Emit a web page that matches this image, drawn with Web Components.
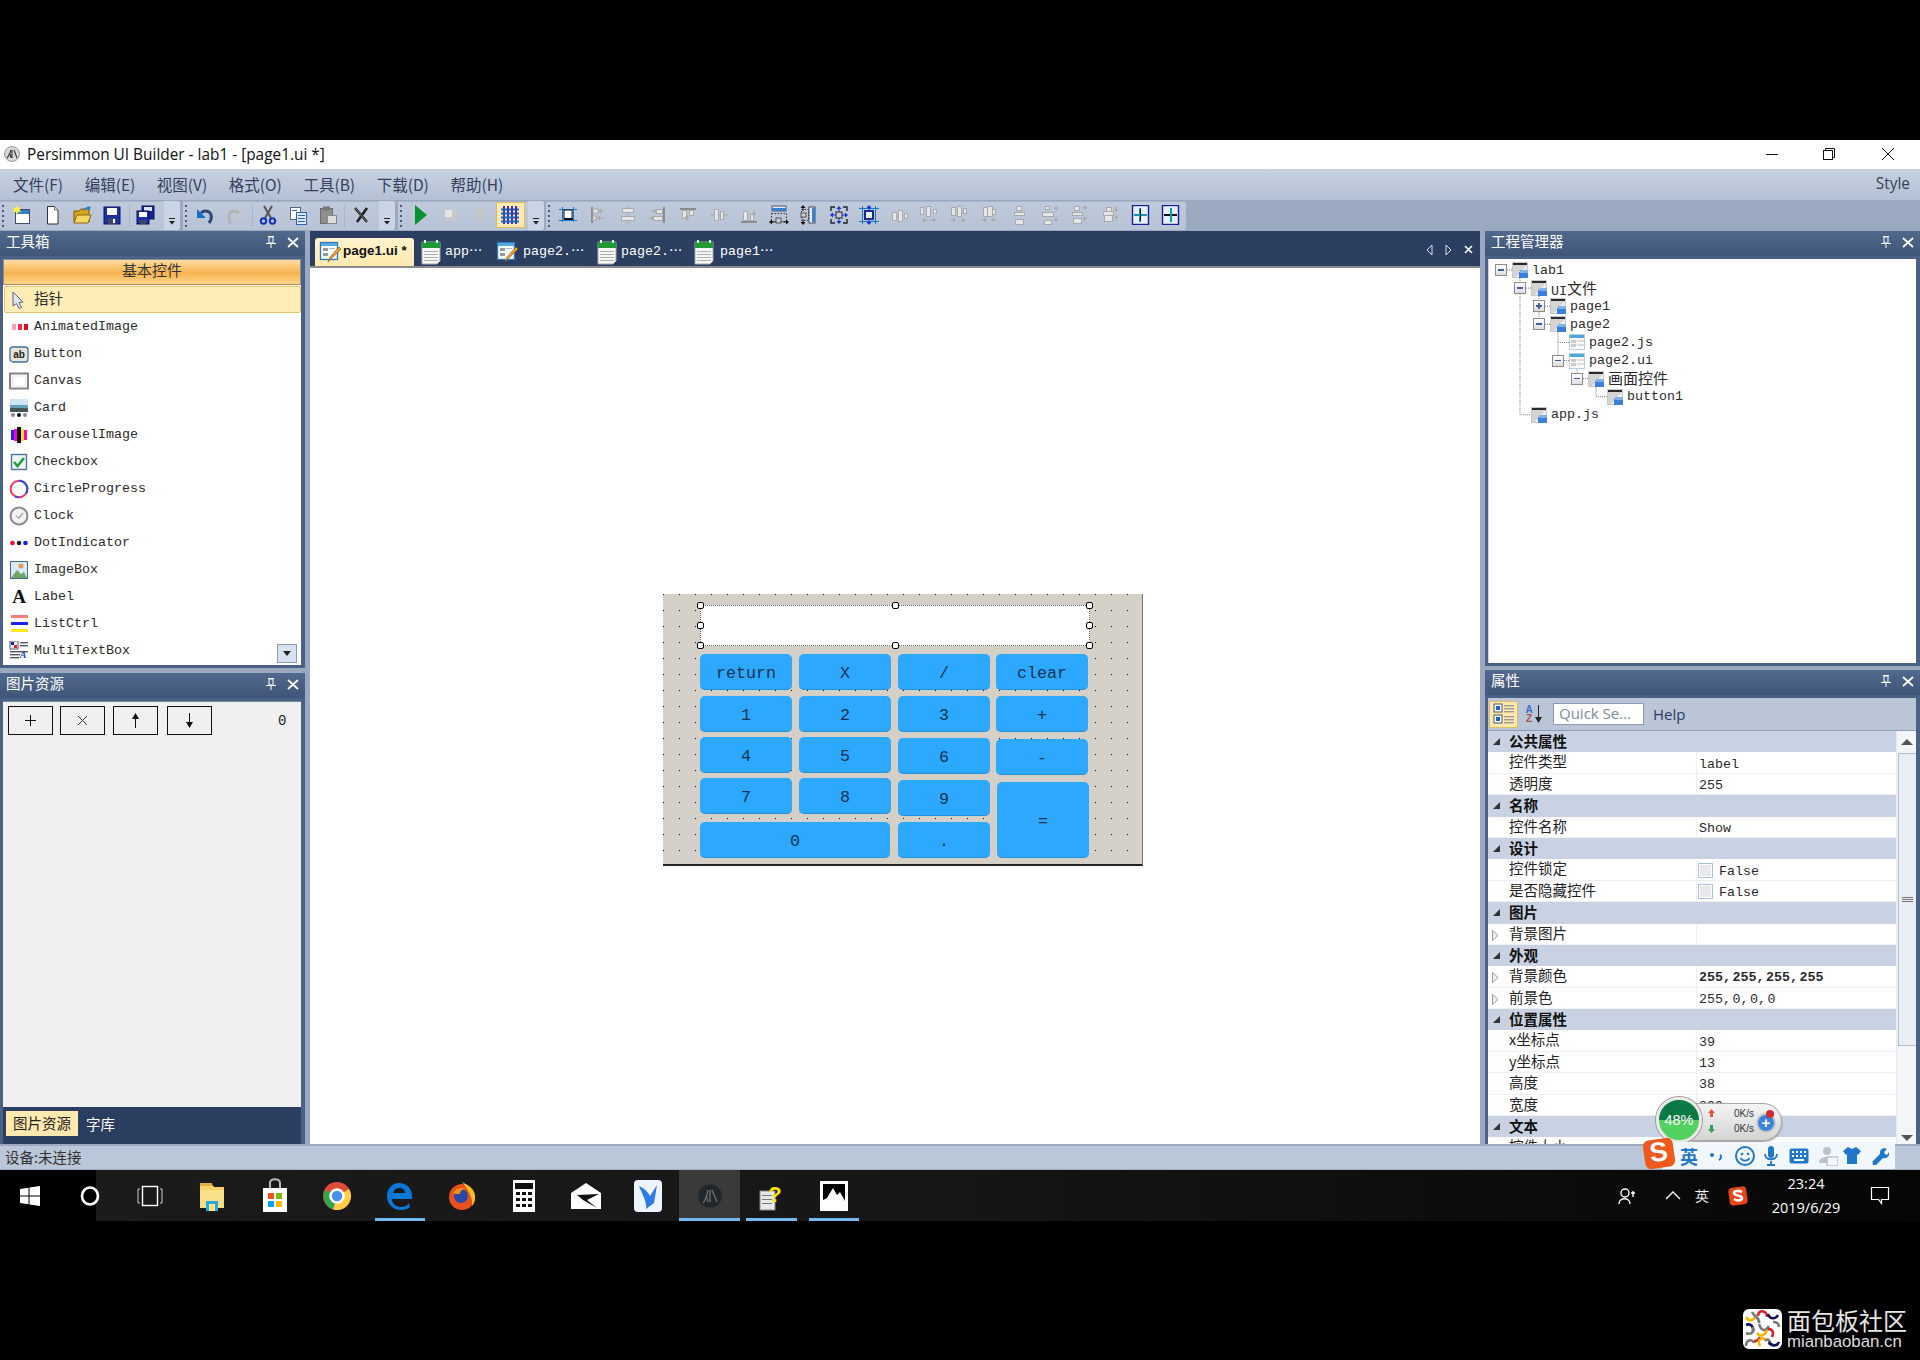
<!DOCTYPE html>
<html lang="zh"><head><meta charset="utf-8"><title>Persimmon UI Builder</title>
<style>
html,body{margin:0;padding:0;background:#000;}
body{width:1920px;height:1360px;overflow:hidden;font-family:"Noto Sans CJK SC",sans-serif;}
</style></head><body><ui-app></ui-app>
<script>
const CJK='"Noto Sans CJK SC",sans-serif', MONO='"Liberation Mono","Noto Sans CJK SC",monospace';
const svg=(w,h,b,vw,vh)=>`<svg xmlns="http://www.w3.org/2000/svg" width="${w}" height="${h}" viewBox="0 0 ${vw||w} ${vh||h}" style="display:block;flex:none">${b}</svg>`;
const mx=t=>t.replace(/[\u4e00-\u9fff]+/g,m=>`<span class="c">${m}</span>`);
function def(name,css,html){customElements.define(name,class extends HTMLElement{constructor(){super();const r=this.attachShadow({mode:'open'});r.innerHTML=`<style>${css}</style>`+(typeof html==='function'?html(this):html);}});}
const R=(x,y,w,h,f,e='')=>`<rect x="${x}" y="${y}" width="${w}" height="${h}" fill="${f}" ${e}/>`;
const P=(d,e)=>`<path d="${d}" ${e}/>`;
const g='#a9a9a9',gl='#e6e6e6',gd='#8c8c8c',nv='#1a1a9a',tl='#0a9ab0';
const box=(x,y,w,h)=>R(x+.5,y+.5,w,h,gl,`stroke="${g}"`);
const arr=(x,y,d,c=g)=>({r:P(`M${x} ${y-2.5}l3 2.5-3 2.5z`,`fill="${c}"`)+R(x-3,y-.5,3,1,c),l:P(`M${x} ${y-2.5}l-3 2.5 3 2.5z`,`fill="${c}"`)+R(x,y-.5,3,1,c),u:P(`M${x-2.5} ${y}l2.5-3 2.5 3z`,`fill="${c}"`)+R(x-.5,y,1,3,c),d:P(`M${x-2.5} ${y}l2.5 3 2.5-3z`,`fill="${c}"`)+R(x-.5,y-3,1,3,c)}[d]);
const TB={
 nw:R(3.5,4.5,14,14,'#fff','stroke="#40506a"')+R(4,5,13,4,'#2f7fc4')+P('M5 0l1.3 3 3-.8-1.6 2.7 1.6 2.7-3-.8L5 10 3.7 6.8.7 7.6l1.6-2.7L.7 2.2l3 .8z','fill="#ffef4a"'),
 file:P('M5.5 1.5h7l3.5 3.5v14h-10.5z','fill="#fff" stroke="#333"')+P('M12.5 1.5v3.5h3.5','fill="#ddd" stroke="#777"'),
 open:P('M2 6h5l2-2h8v13H2z','fill="#d9a520" stroke="#7a5a10"')+P('M2 18l3-8h14l-3 8z','fill="#f6d766" stroke="#8a6a10"')+P('M11 6c1-3 3-4 5-4l-1-1 4 1-2 4-1-2c-2 0-3 1-5 2z','fill="#2d7fd0"'),
 save:R(2,2,16,17,'#1b2fa8','stroke="#0a1560"')+R(5,3,10,7,'#fff')+R(6,13,8,6,'#3d4660')+R(11,14,2,4,'#fff'),
 all:R(7,1,12,13,'#15279a','stroke="#081050"')+R(9,2,8,4,'#dfe6ff')+R(2,6,12,13,'#1b2fa8','stroke="#081050"')+R(4,7,8,5,'#fff')+R(5,15,6,4,'#3d4660'),
 undo:P('M14 18c4-5 3-12-4-12-2 0-3 1-4 2','fill="none" stroke="#2f4a78" stroke-width="3"')+P('M2 4v9h9z','fill="#1270c8"'),
 redo:P('M6 18c-4-5-3-12 4-12 2 0 3 1 4 2','fill="none" stroke="#b4b4b4" stroke-width="3"')+P('M18 4v9H9z','fill="#c8c8c8"'),
 cut:P('M6 1l7 12M14 1L7 13','stroke="#555" stroke-width="2" fill="none"')+`<circle cx="5.5" cy="16" r="2.7" fill="none" stroke="#1632b0" stroke-width="2"/><circle cx="14.5" cy="16" r="2.7" fill="none" stroke="#1632b0" stroke-width="2"/>`,
 copy:R(2.5,2.5,10,12,'#fff','stroke="#567"')+R(8.5,7.5,10,12,'#dbe9fb','stroke="#2a62b8"')+R(10,10,7,1,'#2a62b8')+R(10,13,7,1,'#2a62b8')+R(10,16,7,1,'#2a62b8')+R(4,5,5,1,'#2a62b8'),
 paste:R(2.5,3.5,12,15,'#8f8f8f','stroke="#6c6c6c"')+R(5,1.5,7,4,'#777')+R(9.5,10.5,9,8,'#dcdcdc','stroke="#888"'),
 del:P('M4 3l12 14M16 3L6 17','stroke="#222" stroke-width="2.6" fill="none"')+P('M4 3l12 14','stroke="#777" stroke-width="1" fill="none"'),
 play:P('M5 0l12 10L5 20z','fill="#0a9030"'),
 stop:R(5,5,11,11,'#c8c8c8')+R(5,5,7,7,'#e6e6e6'),
 down:R(8,3,4,8,'#c4c4c4')+P('M4 10h12l-6 8z','fill="#c4c4c4"'),
 grid:[3,7,11,15].map(v=>R(v,1,2,18,'#3a2fb0')+R(1,v+.5,18,2,'#1a6ac8')).join(''),
 a0:R(4,2,1,15,'#1a78c8')+R(15,2,1,15,'#1a78c8')+R(1,4,18,1,'#1a78c8')+R(1,15,18,1,'#1a78c8')+R(6,5,8,9,'#fff','stroke="#111"')+R(6,13,9,2,'#111'),
 a1:R(3,2,2,16,gd)+R(5,4,5,4,gl,`stroke="${g}"`)+arr(13,6,'l')+R(5,11,3,4,gl,`stroke="${g}"`)+arr(12,13,'l'),
 a2:R(9.5,1,1,18,g)+box(4,3,11,4)+box(3,11,13,4),
 a3:R(15,2,2,16,gd)+box(8,4,6,4)+arr(6,6,'r')+box(5,11,9,4)+arr(3,13,'r'),
 a4:R(2,3,16,2,gd)+box(4,5,4,8)+box(11,5,4,5)+arr(9,13,'u'),
 a5:R(1,9.5,18,1,g)+box(5,4,4,11)+box(11,6,3,8),
 a6:R(2,16,16,2,gd)+box(4,6,4,9)+box(11,9,3,6)+arr(15,8,'d'),
 a7:R(3,1,14,5,'#dfeaf6','stroke="#556"')+R(3,3,14,3,'#3a7fd0')+`<rect x="2.5" y="8.5" width="15" height="8" fill="none" stroke="#333" stroke-dasharray="1.5 1.5"/>`+R(7,13,5,5,'#ccc','stroke="#555"')+arr(3,17,'l','#111')+arr(17,17,'r','#111'),
 a8:R(10,2,6,16,'#e8f0fa','stroke="#446"')+R(13,3,3,14,'#3a7fd0')+`<rect x="2.5" y="4.5" width="7" height="11" fill="none" stroke="#333" stroke-dasharray="1.5 1.5"/>`+R(2,8,5,4,'#ccc','stroke="#555"')+arr(4,3,'u','#111')+arr(4,17,'d','#111'),
 a9:P('M2 6V2h4M14 2h4v4M18 14v4h-4M6 18H2v-4','fill="none" stroke="#222" stroke-width="1.4"')+R(7,7,6,6,'#ccc','stroke="#222"')+arr(10,4,'u','#1030d0')+arr(10,16,'d','#1030d0')+arr(4,10,'l','#1030d0')+arr(16,10,'r','#1030d0'),
 a10:R(3,1,1,18,'#1a78c8')+R(16,1,1,18,'#1a78c8')+R(0,3,20,1,'#1a78c8')+R(0,16,20,1,'#1a78c8')+R(5,5,10,10,'#1a2a90')+R(7,7,6,6,'#e8f2fc')+arr(10,3,'u','#1030d0')+arr(10,17,'d','#1030d0'),
 a11:box(3,7,4,8)+box(9,5,4,11)+box(15,8,3,5),
 a12:box(1,2,3,7)+box(7,1,4,10)+box(14,4,3,4)+arr(6,15,'l')+arr(14,15,'r'),
 a13:box(2,2,4,8)+box(8,1,4,10)+box(14,3,3,5)+arr(4,15,'r')+arr(15,15,'l'),
 a14:box(4,2,4,9)+box(8,1,5,10)+box(13,4,3,5)+arr(5,15,'r')+arr(15,15,'l'),
 a15:box(7,1,5,4)+box(5,7,10,3)+box(6,14,8,5),
 a16:box(5,1,4,3)+box(2,7,11,4)+box(4,15,7,4)+arr(16,4,'u')+arr(16,14,'d'),
 a17:box(4,1,5,4)+box(2,7,10,3)+box(3,13,8,5)+arr(15,2,'d')+arr(15,14,'u'),
 a18:box(6,2,5,4)+box(3,6,10,4)+box(4,10,8,6)+arr(16,4,'d')+arr(16,13,'u'),
 a19:R(2.5,.5,16,19,'#e8eef6',`stroke="${nv}" stroke-width="1.4"`)+R(4,9,13,2,tl)+R(9,3,2,14,tl)+R(10,4,1,12,'#111'),
 a20:R(2.5,.5,16,19,'#e8eef6',`stroke="${nv}" stroke-width="1.4"`)+R(4,9,13,2,'#111')+R(10,3,2,14,tl)
};
const tbi=n=>svg(20,20,TB[n]);

def('title-bar',`:host{display:flex;align-items:center;height:29px;box-sizing:border-box;padding-bottom:1px;background:#fff;color:#111;font:15.4px "Open Sans",sans-serif}
.ic{margin:0 7px 0 4px}.ctl{margin-left:auto;display:flex}.ctl span{width:58px;height:27px;display:flex;align-items:center;justify-content:center}`,
()=>`<span class="ic">${svg(16,16,`<circle cx="8" cy="8" r="7.5" fill="#d8d8d8" stroke="#999"/><path d="M3 12c2-2 3-5 4-8M6 8c1 2 1 3 1 4M8 4v8M10 4l3 8" stroke="#333" fill="none" stroke-width="1.1"/>`)}</span><span>Persimmon UI Builder - lab1 - [page1.ui *]</span>
<span class="ctl"><span>${svg(12,12,R(0,6,12,1,'#111'))}</span><span style="margin-left:-1px;margin-right:1px">${svg(12,12,`<rect x=".5" y="2.5" width="9" height="9" fill="#fff" stroke="#111"/><path d="M2.5 2.5V.5h9v9h-2" fill="none" stroke="#111"/>`)}</span><span style="margin-right:3px">${svg(12,12,'<path d="M0 0l12 12M12 0L0 12" stroke="#111" fill="none"/>')}</span></span>`);

def('menu-bar',`:host{display:flex;align-items:center;height:31px;box-sizing:border-box;padding:0 0 2px 13px;background:linear-gradient(#c6d1e1,#b4c1d4);color:#33415c;font:15.5px ${CJK}}
span{margin-right:21.6px;white-space:nowrap}.st{margin:0 10px 0 auto;font:15.4px "Open Sans",sans-serif}`,
()=>['文件(F)','编辑(E)','视图(V)','格式(O)','工具(B)','下载(D)','帮助(H)'].map(t=>`<span>${t}</span>`).join('')+'<span class="st">Style</span>');

def('tool-strip',`:host{display:flex;height:31px;background:#9aa9c0;padding-top:1px;box-sizing:border-box;gap:3px}
.bar{display:flex;align-items:center;height:29px;background:linear-gradient(#bfcadb,#b7c4d6);border-radius:0 3px 3px 0;box-shadow:inset 0 1px 0 #a6b4ca;position:relative}
.grip{width:2px;height:22px;margin:0 3px 0 2px;background:repeating-linear-gradient(#4a5a78 0 2px,transparent 2px 5px);flex:none}
.b{width:30.1px;height:28px;margin-top:-1px;display:flex;align-items:center;justify-content:center;flex:none;box-sizing:border-box}
.b.on{background:#ffe9ae;border:1px solid #e3bd62;width:29px;height:26px;margin:-1px .5px 0}
.ch{margin-left:auto;width:16px;height:29px;background:#c9d4e4;border-radius:0 3px 3px 0;display:flex;align-items:flex-end;justify-content:center;padding-bottom:5px;box-sizing:border-box}
.sep{width:2.5px;height:22px;flex:none;box-shadow:inset -1px 0 0 #a9b6ca}`,
()=>{const chev=`<span class="ch">${svg(8,8,R(1,1,6,1,'#222')+P('M1 4h6l-3 3.5z','fill="#222"'))}</span>`;
 const bar=(w,items,c,st='')=>`<div class="bar" style="${w?`width:${w}px;`:''}${st}"><span class="grip"></span>${items.map(n=>n==='|'?'<span class="sep"></span>':`<span class="b ${n==='grid'?'on':''}">${tbi(n)}</span>`).join('')}${c?chev:''}</div>`;
 const al=[];for(let i=0;i<=20;i++)al.push('a'+i);
 return bar(180,['nw','file','open','save','|','all'],1)+bar(212,['undo','redo','|','cut','copy','paste','|','del'],1)+bar(146,['play','stop','down','grid'],1)+bar(640,al,0,'margin-left:-1px');});

def('tool-panel',`:host{display:flex;flex-direction:column;background:#4a6085;min-height:0}
.h{height:25px;flex:none;display:flex;align-items:center;background:linear-gradient(#51698c,#3f5579);color:#fff;font:14.5px ${CJK};padding:0 5px 7px 6px;box-sizing:border-box}
.h i{margin-left:auto;margin-right:11px;margin-top:4px}.h b{margin-right:1px;margin-top:4px}
.c{flex:1;min-height:0;margin:3px 4px 3px 3px;position:relative;overflow:hidden;display:flex;flex-direction:column}
:host([flush]) .c{margin-bottom:0}`,
t=>`<div class="h"><span>${t.getAttribute('label')}</span><i>${svg(10,12,R(2,0,6,1,'#fff')+P('M3 1h4v6H3z','fill="none" stroke="#fff"')+R(0,7,10,1,'#fff')+R(4.5,8,1,4,'#fff'))}</i><b>${svg(12,11,'<path d="M1 1l10 9M11 1L1 10" stroke="#fff" stroke-width="1.7" fill="none"/>')}</b></div><div class="c"><slot></slot></div>`);

const LI={
 AnimatedImage:R(3,7,4,6,'#ff9db0')+R(9,7,4,6,'#ff2a4a')+R(15,7,4,6,'#ee0022'),
 Button:`<rect x="1" y="3" width="18" height="15" rx="3" fill="#e8e4da" stroke="#45709c" stroke-width="1.3"/><text x="10" y="14" font-family="Liberation Sans" font-size="10" font-weight="700" text-anchor="middle" fill="#222">ab</text>`,
 Canvas:R(1,2.5,18,15,'#fff','stroke="#858585" stroke-width="2"')+`<rect x="3.5" y="5" width="13" height="10" fill="none" stroke="#ccc" stroke-dasharray="1 1"/>`,
 Card:R(1,1,18,13,'#cfe6f4')+R(1,7,18,3,'#66a0b8')+R(1,10,18,4,'#455')+`<circle cx="4" cy="17" r="2" fill="#888"/><circle cx="10" cy="17" r="2" fill="#111"/><circle cx="16" cy="17" r="2" fill="#888"/>`,
 CarouselImage:R(2,5,3,10,'#2222ee')+R(5,4,3,12,'#ff00cc')+R(8,2,4,16,'#000')+R(12,4,3,12,'#ffe000')+R(15,5,3,10,'#ff00cc'),
 Checkbox:R(2.5,2.5,15,15,'#eef3f8','stroke="#4f7498" stroke-width="1.4"')+P('M5 10l3.5 4L15 6','fill="none" stroke="#18a030" stroke-width="2.5"'),
 CircleProgress:`<circle cx="10" cy="10" r="8.3" fill="#fff" stroke="#ff3355" stroke-width="2"/><path d="M10 1.7a8.3 8.3 0 0 1 7 12.8M10 18.3a8.3 8.3 0 0 1-4-1" fill="none" stroke="#2a50ee" stroke-width="2"/>`,
 Clock:`<circle cx="10" cy="10" r="8.5" fill="#f2f2f2" stroke="#8a8a8a" stroke-width="2"/><path d="M7 10l3 2 4-5" fill="none" stroke="#aaa" stroke-width="1.4"/>`,
 DotIndicator:`<circle cx="3.5" cy="10" r="2.3" fill="#ee1122"/><circle cx="10" cy="10" r="2.3" fill="#222"/><circle cx="16.5" cy="10" r="2.3" fill="#1122ee"/>`,
 ImageBox:R(1.5,1.5,17,17,'#d8eaf6','stroke="#49688c"')+P('M2 18l6-8 4 4 3-2 3 6z','fill="#6ea868"')+`<circle cx="12" cy="6" r="2.5" fill="#e89a50"/>`,
 Label:`<text x="10" y="16" font-family="Liberation Serif" font-size="19" font-weight="700" text-anchor="middle" fill="#111">A</text>`,
 ListCtrl:R(2,1,17,3,'#ff7a7a')+R(2,8,17,3,'#1a22ee')+R(2,15,17,3,'#ffe820'),
 MultiTextBox:R(1,0,8,8,'#fff','stroke="#556"')+R(2,1,3,3,'#1122cc')+R(5,4,3,3,'#ee2222')+R(11,1,8,1.4,'#556')+R(11,4,8,1.4,'#556')+R(1,10,18,1.4,'#556')+R(1,13,10,1.4,'#556')+R(1,16,9,1.4,'#556')+`<text x="14" y="17" font-family="Liberation Serif" font-size="10" font-style="italic" font-weight="700" text-anchor="middle" fill="#2a4aa8">A</text>`
};
def('list-box',`:host{display:flex;flex-direction:column;flex:1;background:#fff;font:13.33px ${MONO};color:#2a2a2a;position:relative;min-height:0}
.hd{height:26px;margin-bottom:1px;box-sizing:border-box;border:1px solid #8a8f98;border-bottom-color:#b08a50;background:linear-gradient(#fddca0,#f9b350 55%,#fdd58a);text-align:center;font:15px/20px ${CJK};color:#333}
.pt{height:27px;box-sizing:border-box;background:#ffedb8;border:1px solid #e8c468;border-radius:2px;margin:0 0 0 1px;display:flex;align-items:center;padding-left:6px;font:14.5px ${CJK}}
.pt span{margin-left:9px;margin-top:-5px}
.r{height:27px;display:flex;align-items:center;padding-left:6px}.r span{margin-left:5px}
.dn{position:absolute;right:4px;bottom:2px;width:20px;height:19px;box-sizing:border-box;background:#d6e2f0;border:1px solid #8b9bb2;display:flex;align-items:center;justify-content:center}`,
()=>`<div class="hd">基本控件</div><div class="pt">${svg(14,18,'<path d="M2 1l10 10-4 .5 2.5 5-2.5 1-2.5-5L2 15z" fill="#dfe6f4" stroke="#5b6780"/>')}<span>指针</span></div>`+Object.keys(LI).map(k=>`<div class="r">${svg(20,20,LI[k])}<span>${k}</span></div>`).join('')+`<div class="dn">${svg(8,5,'<path d="M0 0h8L4 5z" fill="#222"/>')}</div>`);

def('image-res',`:host{display:flex;flex-direction:column;flex:1;min-height:0}
.m{flex:1;background:#f0f0f0;display:flex;padding:4px 0 0 5px;position:relative;border-top:1px solid #7c8699}
.b{width:45px;height:29px;box-sizing:border-box;border:1px solid #111;display:flex;align-items:center;justify-content:center;margin-right:var(--g)}
.n{position:absolute;left:275px;top:11px;font:14px ${MONO};color:#222}
.ft{height:33px;flex:none;margin:0 -4px 0 -3px;display:flex;align-items:flex-start;padding:4px 0 0 6px;background-color:#2a3e60;background-image:repeating-conic-gradient(#2e4266 0 25%,#283b5c 0 50%);background-size:4px 4px;font:14.5px ${CJK};color:#fff}
.ft b{font-weight:400;width:72px;height:25px;background:#ffe9ae;color:#222;text-align:center;line-height:23px}.ft span{margin:2px 0 0 8px}`,
()=>`<div class="m"><span class="b" style="--g:7px">${svg(11,11,R(0,5,11,1,'#111')+R(5,0,1,11,'#111'))}</span><span class="b" style="--g:8px">${svg(11,11,'<path d="M1 1l9 9M10 1l-9 9" stroke="#333" fill="none"/>')}</span><span class="b" style="--g:9px">${svg(7,15,R(3,2,1,13,'#111')+P('M0 6l3.5-6L7 6z','fill="#111"'))}</span><span class="b">${svg(7,15,R(3,0,1,13,'#111')+P('M0 9l3.5 6L7 9z','fill="#111"'))}</span><span class="n">0</span></div><div class="ft"><b>图片资源</b><span>字库</span></div>`);

const ti=(k)=>k==='a'?R(.5,.5,15,15,'#eee','stroke="#c8c8c8"')+R(1,1,14,2,'#2a2a2a')+P('M1 3h14L4 15H1z','fill="#d4d4d4"')+R(7,10,9,6,'#3c7fd8')+R(8,8,8,3,'#7fb0ea'):R(.5,.5,15,15,'#f8f8f8','stroke="#b4cde0"')+R(1,1,14,3,'#4aa8dc')+R(2,6,5,3,'#ccc')+R(2,10,5,3,'#ccc')+R(8,6,7,2,'#ddd')+R(8,10,7,2,'#ddd');
def('tree-view',`:host{display:block;flex:1;background:#fff;font:13.33px ${MONO};color:#2a2a2a;position:relative;padding-top:2px;border-left:1px solid #cfd6e2}
.c{font:15px ${CJK};position:relative;top:-1px}.r{height:18.1px;display:flex;align-items:center;position:relative}
.e{width:12px;height:12px;box-sizing:border-box;border:1px solid #8c8c8c;background:linear-gradient(#fff,#ddd);margin-right:5px;flex:none;position:relative}
.e:before{content:"";position:absolute;left:2px;right:2px;top:4px;background:#3f5f9f;height:1.5px}
.e.p:after{content:"";position:absolute;top:2px;bottom:2px;left:4.3px;width:1.5px;background:#3f5f9f}
.s{width:17px;flex:none}.t{margin-left:4px;white-space:nowrap}svg.l{position:absolute;left:0;top:1px}`,
()=>{const rows=[[0,'m','a','lab1'],[1,'m','a','UI文件'],[2,'p','a','page1'],[2,'m','a','page2'],[3,'','b','page2.js'],[3,'m','b','page2.ui'],[4,'m','a','画面控件'],[5,'','a','button1'],[1,'','a','app.js']];
 const y=i=>10+18.1*i;const d='stroke="#777" stroke-dasharray="1 1" fill="none"';
 let l=`<path d="M31 ${y(0)}V${y(8)}H44M50 ${y(1)}V${y(3)}M69 ${y(3)}V${y(5)}M69 ${y(4)}H80M88 ${y(5)}V${y(6)}M107 ${y(6)}V${y(7)}H118" ${d}/>`;
 rows.forEach((r,i)=>{if(r[1]){const x=12+19*r[0];l+=`<path d="M${x+6} ${y(i)}h6" ${d}/>`}});
 return `<svg class="l" width="200" height="200">${l}</svg>`+rows.map(r=>`<div class="r" style="padding-left:${6+19*r[0]}px">${r[1]?`<span class="e ${r[1]==='p'?'p':''}"></span>`:'<span class="s"></span>'}${svg(16,16,ti(r[2]))}<span class="t">${mx(r[3])}</span></div>`).join('');});

const IC_UI=svg(22,24,R(1.5,2.5,17,17,'#f6fbff','stroke="#2f79b8" stroke-width="1.3"')+R(2,3,16,3,'#55a8e0')+R(4,8,5,3,'#999')+R(4,13,5,3,'#999')+R(10,8,6,1,'#bbb')+P('M9 22l2-5L20 7l2 2-10 10z','fill="#f0a030" stroke="#7a5010" stroke-width=".6"'));
const IC_JS=svg(22,26,P('M2 3h18v19l-3 3H2z','fill="#f6f6f6" stroke="#aaa"')+R(2,3,18,6,'#1f9a34')+R(4,1,2,3,'#cfd')+R(16,1,2,3,'#cfd')+[12,15,18,21].map(v=>R(4,v,14,1,'#b0b0b0')).join(''));
def('doc-tabs',`:host{display:flex;height:35px;flex:none;padding:7px 0 0 5px;box-sizing:border-box;background-color:#2a3e60;background-image:repeating-conic-gradient(#2e4266 0 25%,#283b5c 0 50%);background-size:4px 4px;color:#fff;font:13.33px ${MONO};position:relative}
.t{display:flex;align-items:center;height:28px;flex:none;overflow:hidden;white-space:nowrap}.t span{margin:-6px 0 0 3px}
.a{background:linear-gradient(#fff3cf,#ffe9ae);color:#111;font:700 13.5px "Liberation Sans",sans-serif;border-radius:3px 3px 0 0;padding-left:4px}
.a span{margin-top:-3px}
.x{margin-left:auto;display:flex;align-items:center;gap:12px;padding:0 7px 5px 0}`,
()=>`<div class="t a" style="width:95px">${IC_UI}<span style="margin-left:2px">page1.ui *</span></div><div class="t" style="width:76px;margin-left:6px">${IC_JS}<span>app⋯</span></div><div class="t" style="width:100px">${IC_UI}<span style="margin-left:5px">page2.⋯</span></div><div class="t" style="width:97px">${IC_JS}<span>page2.⋯</span></div><div class="t">${IC_JS}<span style="margin-left:5px">page1⋯</span></div><div class="x">${svg(7,12,'<path d="M6 1v10L1 6z" fill="none" stroke="#dde"/>')}${svg(7,12,'<path d="M1 1v10l5-5z" fill="none" stroke="#dde"/>')}${svg(9,9,'<path d="M1 1l7 7M8 1L1 8" stroke="#fff" stroke-width="1.6" fill="none"/>')}</div>`);

def('calc-key',`:host{position:absolute;box-sizing:border-box;background:#2ca8ff;border-bottom:1px solid #2590dc;border-radius:5px;display:flex;align-items:center;justify-content:center;padding-top:3px;font:16.67px ${MONO};color:#10344f}`,`<slot></slot>`);
def('sel-handle',`:host{position:absolute;width:7px;height:7px;box-sizing:border-box;background:#fff;border:1px solid #000;border-radius:2px;transform:translate(-3px,-3px)}`,'');
def('design-canvas',`:host{position:absolute;left:353px;top:326px;width:480px;height:272px;box-sizing:border-box;background-color:#d4d0c8;background-image:radial-gradient(circle at .5px .5px,#111 .5px,transparent .72px);background-size:16px 16px;border-right:1px solid #777;border-bottom:2px solid #222}
.sel{position:absolute;left:37px;top:11px;width:390px;height:41px;box-sizing:border-box;background:#fff;border:1px dotted #666}`,
()=>{const o=[663,594];const k=(t,x1,y1,x2,y2)=>`<calc-key style="left:${x1-o[0]}px;top:${y1-o[1]}px;width:${x2-x1}px;height:${y2-y1}px">${t}</calc-key>`;
 const c1=[700,792],c2=[799,891],c3=[898,990],c4=[996,1088];
 const hs=[[0,0],[.5,0],[1,0],[0,.5],[1,.5],[0,1],[.5,1],[1,1]].map(h=>`<sel-handle style="left:${37+h[0]*389}px;top:${11+h[1]*40}px"></sel-handle>`).join('');
 return `<div class="sel"></div>`+hs+k('return',...[c1[0],654,c1[1],690])+k('X',c2[0],654,c2[1],690)+k('/',c3[0],654,c3[1],690)+k('clear',c4[0],654,c4[1],690)
 +k('1',c1[0],696,c1[1],732)+k('2',c2[0],696,c2[1],732)+k('3',c3[0],696,c3[1],732)+k('+',c4[0],696,c4[1],732)
 +k('4',c1[0],737,c1[1],773)+k('5',c2[0],737,c2[1],773)+k('6',c3[0],738,c3[1],774)+k('-',c4[0],739,c4[1],775)
 +k('7',c1[0],778,c1[1],814)+k('8',c2[0],778,c2[1],814)+k('9',c3[0],780,c3[1],816)+k('=',997,782,1089,858)
 +k('0',700,822,890,858)+k('.',c3[0],822,c3[1],858);});
def('doc-area',`:host{display:flex;flex-direction:column;min-height:0;margin-bottom:2px}.w{flex:1;background:#fff;border-top:2px solid #8a8a8a;position:relative}`,
`<doc-tabs></doc-tabs><div class="w"><design-canvas></design-canvas></div>`);

def('prop-grid',`:host{display:flex;flex-direction:column;flex:1;min-height:0;background:#bac6d8;position:relative;overflow:hidden}
.tb{height:33px;flex:none;display:flex;align-items:center;box-sizing:border-box;padding-left:1px;border-bottom:1px solid #8f9db5;font:15px "Open Sans",sans-serif;color:#2a3a62}
.ab{width:29px;height:27px;box-sizing:border-box;background:#ffe9ae;border:1px solid #e3bd62;border-radius:2px;display:flex;align-items:center;justify-content:center}
.az{margin:0 10px 0 5px}.q{width:91px;height:22px;box-sizing:border-box;background:#fff;border:1px solid #8b9ab2;color:#7c8a9c;line-height:19px;padding-left:5px;white-space:nowrap;overflow:hidden}
.hp{margin-left:9px}
.g{flex:1;background:#fff;display:flex;min-height:0}
.rows{width:408px;flex:none;overflow:hidden}
.r{height:21.4px;display:flex;box-sizing:border-box;border-bottom:1px solid #eef0f3;font:13.33px/21px ${MONO};color:#2a2a2a;position:relative;padding-left:21px;white-space:nowrap}
.r.gp{background:#c8d2e2;border-bottom:none;font:700 14.5px/19px ${CJK};color:#111}
.r .k{width:187px;flex:none;font:14.5px/17px ${CJK};color:#222;box-sizing:border-box}
.r .v{flex:1;border-left:1px solid #eef0f3;padding:4px 0 0 2px;display:flex;align-items:center;line-height:16px;word-spacing:-6.5px}
.r .v.b{font-weight:700}.r .v i{width:15px;height:15px;box-sizing:border-box;border:1px solid #a9bfdc;background:#e9e9e9;box-shadow:inset 0 0 0 1px #fff;margin:-2px 6px 0 -1px;flex:none}
.tri{position:absolute;left:5px;top:7px}
.sb{width:21px;flex:none;background:#f4f5f8;position:relative;border-left:1px solid #e6e8ee}
.th{position:absolute;left:1px;right:1px;top:22px;height:293px;box-sizing:border-box;background:#e9edf4;border:1px solid #b4bccb;display:flex;align-items:center;justify-content:center}
.up{position:absolute;left:4px;top:8px}.dw{position:absolute;left:4px;bottom:3px}`,
()=>{const D=[['控件类型','label'],['透明度','255'],'名称',['控件名称','Show'],'设计',['控件锁定','False','c'],['是否隐藏控件','False','c'],'图片',['背景图片','','','e'],'外观',['背景颜色','255, 255, 255, 255','b','e'],['前景色','255, 0, 0, 0','','e'],'位置属性',['x坐标点','39'],['y坐标点','13'],['高度','38'],['宽度','390'],'文本',['控件大小','']];
 const gt=svg(7,7,'<path d="M7 0v7H0z" fill="#333"/>'), et=svg(7,11,'<path d="M.5.5v10L6 5.5z" fill="#f2f2f2" stroke="#999"/>');
 const rows=['公共属性',...D].map(r=>typeof r==='string'?`<div class="r gp"><span class="tri">${gt}</span>${r}</div>`:
  `<div class="r">${r[3]?`<span class="tri" style="top:6px;left:4px">${et}</span>`:''}<span class="k">${r[0]}</span><span class="v ${r[2]==='b'?'b':''}">${r[2]==='c'?'<i></i>':''}${r[1]}</span></div>`).join('');
 const ab=svg(22,22,R(1,1,8,8,'#fff','stroke="#456"')+R(3,3,4,4,'#1a60c0')+R(1,12,8,8,'#fff','stroke="#456"')+R(3,14,4,4,'#1a60c0')+[2,5,8,13,16,19].map(v=>R(11,v,10,1.4,'#9a9a9a')).join(''));
 const az=svg(20,20,`<text x="6" y="9" font-family="Liberation Sans" font-weight="700" font-size="10" text-anchor="middle" fill="#3a6fc8">A</text><text x="6" y="18" font-family="Liberation Sans" font-weight="700" font-size="10" text-anchor="middle" fill="#b05050">Z</text>`+R(15,1,1,14,'#222')+P('M12 13h7l-3.500 6z','fill="#222"'));
 return `<div class="tb"><span class="ab">${ab}</span><span class="az">${az}</span><span class="q">Quick Se...</span><span class="hp">Help</span></div><div class="g"><div class="rows">${rows}</div><div class="sb"><span class="up">${svg(12,6,'<path d="M0 6l6-6 6 6z" fill="#555"/>')}</span><div class="th">${svg(11,6,R(0,0,11,1,'#777')+R(0,2,11,1,'#777')+R(0,4,11,1,'#777'))}</div><span class="dw">${svg(12,6,'<path d="M0 0l6 6 6-6z" fill="#555"/>')}</span></div></div>`;});

def('status-bar',`:host{display:flex;align-items:center;height:24px;background:#bac7d8;font:14.5px ${CJK};color:#333;padding:0 0 2px 5px;box-sizing:border-box;border-bottom:1px solid #a0aec2}`,`<span>设备:未连接</span>`);

def('net-widget',`:host{position:absolute;left:1654px;top:1095px;width:130px;height:48px;display:block;font:10px "Liberation Sans",sans-serif}
.pill{position:absolute;left:22px;top:8px;width:106px;height:38px;border-radius:19px;box-sizing:border-box;background:linear-gradient(#f4f4f4,#d4d4d4);border:1px solid #a8a8a8;box-shadow:0 1px 2px #888}
.ball{position:absolute;left:2px;top:2px;width:46px;height:46px;box-sizing:border-box;border-radius:50%;border:3px solid #e8e8e8;box-shadow:0 0 0 1px #9a9a9a;background:linear-gradient(#0a7a45 0 50%,#52d060 50%);color:#fff;font:14.5px/40px "Liberation Sans",sans-serif;text-align:center}
.a{position:absolute;left:54px}.s{position:absolute;left:80px;color:#333}.pl{position:absolute;left:104px;top:20px;width:16px;height:16px;border-radius:50%;background:#3a82dc;box-shadow:0 0 0 2px #c8c8c8;color:#fff;font:700 15px/15px "Liberation Sans";text-align:center}.rd{position:absolute;left:112px;top:15px;width:8px;height:8px;border-radius:50%;background:#d02a30}`,
`<div class="pill"></div><div class="ball">48%</div><span class="a" style="top:14px">${svg(7,8,'<path d="M3.500 0L7 4H5v4H2V4H0z" fill="#e8543a"/>')}</span><span class="a" style="top:30px">${svg(7,8,'<path d="M3.500 8L7 4H5V0H2v4H0z" fill="#2ea050"/>')}</span><span class="s" style="top:13px">0K/s</span><span class="s" style="top:28px">0K/s</span><span class="pl">+</span><span class="rd"></span>`);

def('ime-bar',`:host{position:absolute;left:1642px;top:1138px;width:253px;height:32px;display:block}
.st{position:absolute;left:20px;top:4px;width:233px;height:27px;background:#f2f7fd;display:flex;align-items:center;color:#1f78c8;padding-left:18px;box-sizing:border-box}
.st>*{flex:none}.y{font:700 18px ${CJK};width:28px}.s{position:absolute;left:2px;top:1px;width:30px;height:29px;background:#ee5a1e;border-radius:6px;transform:rotate(-8deg);color:#fff;font:900 27px/27px "Liberation Sans",sans-serif;text-align:center}`,
`<div class="st"><span class="y">英</span><span style="width:27px">${svg(18,18,'<circle cx="4" cy="8" r="2" fill="#1f78c8"/><path d="M12 8c2 1 1 4-1 5" stroke="#1f78c8" stroke-width="2" fill="none"/>')}</span><span style="width:27px">${svg(20,20,'<circle cx="10" cy="10" r="9" fill="none" stroke="#1f78c8" stroke-width="2"/><circle cx="7" cy="8" r="1.3" fill="#1f78c8"/><circle cx="13" cy="8" r="1.3" fill="#1f78c8"/><path d="M5.500 12c2 3.500 7 3.500 9 0" fill="none" stroke="#1f78c8" stroke-width="1.600"/>')}</span><span style="width:27px">${svg(18,20,'<rect x="6" y="0" width="6" height="12" rx="3" fill="#1f78c8"/><path d="M3 8c0 7 12 7 12 0M9 15v3M5 19h8" fill="none" stroke="#1f78c8" stroke-width="1.800"/>')}</span><span style="width:29px">${svg(20,16,R(.5,.5,19,15,'#1f78c8','rx="2"')+[3,7,11,15].map(x=>R(x,3,2,2,'#fff')+R(x,7,2,2,'#fff')).join('')+R(5,11,10,2,'#fff'))}</span><span style="width:25px">${svg(20,20,'<circle cx="9" cy="5" r="4" fill="#b8c4cc"/><path d="M1 17c0-8 14-8 14 0z" fill="#b8c4cc"/>'+R(9,11,11,9,'#f2f7fd','stroke="#aab"'))}</span><span style="width:28px">${svg(18,17,'<path d="M5 0l4 2 4-2 5 4-3 4-1-1v10H4V7L3 8 0 4z" fill="#1f78c8"/>')}</span><span>${svg(18,18,'<path d="M1 15L9 7c-1-4 3-7 7-5l-3 3 1 2 2 1 2-3c1 4-2 7-6 6l-8 8c-2 0-3-2-2-4z" fill="#1f78c8"/>')}</span></div><div class="s">S</div>`);

const TI=[
 svg(22,22,P('M1 4l8.500-1.200V10.500H1zM10.500 2.600L21 1v9.500H10.500zM1 11.500h8.500v7.700L1 18zM10.500 11.500H21V21l-10.500-1.500z','fill="#fff"')),
 svg(20,20,'<ellipse cx="10" cy="10" rx="8" ry="8.500" fill="none" stroke="#fff" stroke-width="2.600"/>'),
 svg(26,22,R(5.500,1.500,15,19,'none','stroke="#fff" stroke-width="1.400"')+P('M3 4H1v14h2M23 4h2v14h-2','fill="none" stroke="#ccc"')),
 svg(28,30,P('M2 2h11l3 4h10v21H2z','fill="#f6d267"')+R(2,2,12,3,'#e0b040')+R(2,9,24,18,'#fbe08a')+R(8,20,12,10,'#29a8e0')+R(11,23,6,7,'#fbe08a')),
 svg(30,36,P('M3 10h24v24H3z','fill="#fff"')+P('M10 10V5c0-5 10-5 10 0v5','fill="none" stroke="#bbb" stroke-width="2"')+R(8,15,6,6,'#f25022')+R(16,15,6,6,'#7fba00')+R(8,23,6,6,'#00a4ef')+R(16,23,6,6,'#ffb900')),
 svg(28,28,'<circle cx="14" cy="14" r="14" fill="#dd4b39"/><path d="M14 14L2 8A14 14 0 0 0 10 27.500z" fill="#2fa84f"/><path d="M14 14l-4 13.500A14 14 0 0 0 28 14C28 11 27 9 26 7z" fill="#ffce42"/><circle cx="14" cy="14" r="6.500" fill="#4a8df0" stroke="#fff" stroke-width="2.500"/>'),
 svg(28,30,P('M23 22c-2 3-5 4-8 4-6 0-9-4-9-8h20v-3C26 7 20 2 13 2 6 2 1 8 1 15c0 8 6 14 14 14 4 0 7-1 9-3zM7 12c1-3 3-5 6-5 4 0 6 2 6 5z','fill="#0a78d7" fill-rule="evenodd"')),
 svg(28,30,'<circle cx="14" cy="16" r="13" fill="#e8501e"/><path d="M14 1c6 3 13 7 13 15 0 4-1 7-3 9 1-7-2-14-10-24z" fill="#ffc020"/><circle cx="13" cy="15" r="7" fill="#2a48a8"/><path d="M5 12c3-5 9-6 13-4-4 0-6 2-6 5-2 0-5 0-7-1z" fill="#f59020"/>'),
 svg(22,32,R(0,0,22,32,'#fff')+R(2,3,18,6,'#111')+[12,18,24].map(y=>[3,9,15].map(x=>R(x,y,4,3,'#111')).join('')).join('')),
 svg(30,26,P('M0 10L15 0l15 10v16H0z','fill="#fff"')+P('M6 12l22-1-12 6 10 8L12 17z','fill="#111"')),
 svg(28,32,'<rect width="28" height="32" rx="4" fill="#eef4ff"/><path d="M5 6c5 2 9 6 11 10l7-11-3 18-8 6c1-6-2-11-7-23z" fill="#2e7be8"/>'),
 svg(26,26,'<circle cx="13" cy="13" r="12" fill="#1f262c" stroke="#333"/><path d="M6 20c3-3 4-8 5-13M9 13c2 2 2 4 2 6M13 7v12M15 7l5 12" stroke="#6a6a6a" stroke-width="1.400" fill="none"/>'),
 svg(24,30,R(1,10,15,19,'#e8e8e8','stroke="#888"')+R(3,14,10,1,'#777')+R(3,18,10,1,'#777')+R(3,22,10,1,'#777')+`<text x="16" y="21" font-family="Liberation Sans" font-weight="700" font-size="22" text-anchor="middle" fill="#ffe400">?</text>`),
 svg(28,30,R(0,0,28,30,'#fff')+P('M3 3h22v17l-5-9-3 3-4-7-6 10-4 2z','fill="#000"'))
];
const TW=[60,59,62,62.5,62,63,62.5,62,61.5,62,62.5,61,62.5,62.5];
def('task-bar',`:host{display:flex;height:51px;flex:none;background:linear-gradient(90deg,#000 0 96px,#1b1b1b 96px,#171717 45%,#0f0f0f 70%,#060606);color:#fff;font:14px "Open Sans",sans-serif}
.i{height:51px;flex:none;display:flex;align-items:center;justify-content:center;box-sizing:border-box;position:relative}
.i.u:after{content:"";position:absolute;left:6px;right:6px;bottom:0;height:3px;background:#76b9ed}.i.h{background:#3a3a3a}.i.h:after{left:0;right:0}
.tr{margin-left:auto;display:flex;width:320px;flex:none;align-items:center}.tr>span{display:flex;justify-content:center;align-items:center;flex:none}
.ck{flex-direction:column;line-height:24px;font-size:14.5px;white-space:nowrap}`,
()=>TI.map((s,i)=>`<span class="i ${[6,11,12,13].includes(i)?'u':''} ${i===11?'h':''}" style="width:${TW[i]}px">${s}</span>`).join('')+`<div class="tr"><span style="width:54px">${svg(18,18,'<circle cx="7" cy="6" r="4" fill="none" stroke="#fff" stroke-width="1.400"/><path d="M1 17c0-7 11-7 11 0M13 6l4 0M15 4v6" stroke="#fff" fill="none" stroke-width="1.400"/>')}</span><span style="width:38px">${svg(16,9,'<path d="M1 8l7-7 7 7" stroke="#fff" fill="none" stroke-width="1.300"/>')}</span><span style="width:20px;font:15px ${CJK}">英</span><span style="width:52px">${svg(20,20,'<rect x="1" y="1" width="18" height="18" rx="4" fill="#e8441a" transform="rotate(-8 10 10)"/><path d="M14 6c-4-2-8-1-8 1 0 3 8 2 8 5 0 3-5 3-8 1" stroke="#fff" stroke-width="2.600" fill="none"/>')}</span><span class="ck" style="width:84px"><span>23:24</span><span>2019/6/29</span></span><span style="width:64px">${svg(20,19,'<path d="M1.500 1.500h17v12h-7v4l-3-4h-7z" fill="none" stroke="#fff" stroke-width="1.200"/>')}</span></div>`);

def('wm-logo',`:host{display:flex;align-items:flex-end;justify-content:flex-end;flex:1;padding:0 13px 11px 0}
.t{margin-left:5px;color:#e6e6e6;display:flex;flex-direction:column}.a{font:24px/26px ${CJK}}.b{font:16.8px/15px "Liberation Sans",sans-serif;color:#ddd;margin-top:1px}`,
()=>{const a=(d,c)=>`<path d="${d}" fill="none" stroke="${c}" stroke-width="2.600"/>`;
 return svg(39,40,'<rect width="39" height="40" rx="6" fill="#fff"/>'+a('M3 8c4 6 9 3 9-3','#f5b800')+a('M9 3c3 6 8 5 7 11','#7a7a7a')+a('M15 7c0-7 9-6 9 1','#dc1e2a')+a('M25 5c2 6 8 5 10 1','#141457')+a('M3 16c5-2 8 2 7 7','#141457')+a('M3 24c5 2 8 0 7-6','#7a7a7a')+a('M16 15c2 6 6 9 10 2','#7a7a7a')+a('M14 24c3 4 8 3 10-3','#f5b800')+a('M25 20c5 0 6 4 4 8','#dc1e2a')+a('M30 13c4 0 6 2 6 5','#7a7a7a')+a('M3 37c0-7 7-7 8-3','#7a7a7a')+a('M11 32c4 1 5-2 6-4','#dc1e2a')+a('M17 37c-3-6 1-9 5-7','#f5b800')+a('M22 32c3-4 6 1 4 4','#7a7a7a')+a('M26 33c3 5 8 4 10 0','#141457'))+`<div class="t"><span class="a">面包板社区</span><span class="b">mianbaoban.cn</span></div>`;});

def('ui-app',`:host{display:flex;flex-direction:column;width:1920px;height:1360px;padding-top:140px;box-sizing:border-box;background:#000;position:relative}
.m{display:grid;grid-template-columns:305px 1170px 435px;column-gap:5px;height:915px;flex:none;background:#9aa9c0}
.col{display:flex;flex-direction:column;min-height:0;margin-bottom:2px}
.l1{height:437px;flex:none;margin-bottom:5px}.l2{flex:1}
.r1{height:435px;flex:none;margin-bottom:4px}.r2{flex:1}`,
`<title-bar></title-bar><menu-bar></menu-bar><tool-strip></tool-strip>
<div class="m"><div class="col"><tool-panel class="l1" label="工具箱"><list-box></list-box></tool-panel><tool-panel class="l2" label="图片资源" flush><image-res></image-res></tool-panel></div>
<doc-area></doc-area>
<div class="col"><tool-panel class="r1" label="工程管理器"><tree-view></tree-view></tool-panel><tool-panel class="r2" label="属性" flush><prop-grid></prop-grid></tool-panel></div></div>
<status-bar></status-bar><task-bar></task-bar><wm-logo></wm-logo><net-widget></net-widget><ime-bar></ime-bar>`);
</script></body></html>
